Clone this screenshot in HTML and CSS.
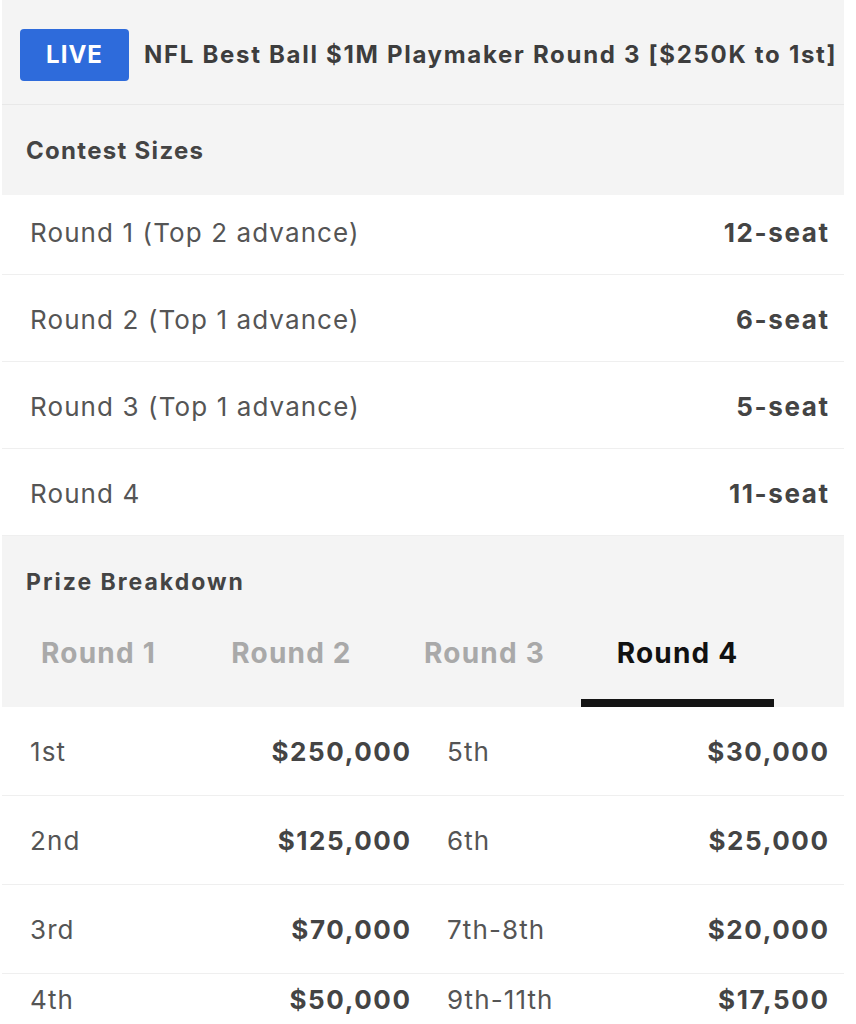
FILE: index.html
```html
<!DOCTYPE html>
<html lang="en">
<head>
<meta charset="utf-8">
<title>Contest Details</title>
<link rel="stylesheet" href="styles.css">
</head>
<body>
<main class="panel">
  <header class="header">
    <span class="badge">LIVE</span>
    <h1 class="title">NFL Best Ball $1M Playmaker Round 3 [$250K to 1st]</h1>
  </header>

  <h2 class="section-head">Contest Sizes</h2>
  <ul class="sizes">
    <li class="size-row size-row-first"><span class="label">Round 1 (Top 2 advance)</span><span class="value">12-seat</span></li>
    <li class="size-row"><span class="label">Round 2 (Top 1 advance)</span><span class="value">6-seat</span></li>
    <li class="size-row"><span class="label">Round 3 (Top 1 advance)</span><span class="value">5-seat</span></li>
    <li class="size-row"><span class="label">Round 4</span><span class="value">11-seat</span></li>
  </ul>

  <section class="prize">
    <h2 class="prize-title">Prize Breakdown</h2>
    <nav class="tabs">
      <span class="tab">Round 1</span>
      <span class="tab">Round 2</span>
      <span class="tab">Round 3</span>
      <span class="tab tab-active">Round 4</span>
    </nav>
  </section>

  <div class="payouts">
    <div class="pay-row">
      <div class="pay-cell"><span class="label">1st</span><span class="amount">$250,000</span></div>
      <div class="pay-cell"><span class="label">5th</span><span class="amount">$30,000</span></div>
    </div>
    <div class="pay-row">
      <div class="pay-cell"><span class="label">2nd</span><span class="amount">$125,000</span></div>
      <div class="pay-cell"><span class="label">6th</span><span class="amount">$25,000</span></div>
    </div>
    <div class="pay-row">
      <div class="pay-cell"><span class="label">3rd</span><span class="amount">$70,000</span></div>
      <div class="pay-cell"><span class="label">7th-8th</span><span class="amount">$20,000</span></div>
    </div>
    <div class="pay-row pay-row-last">
      <div class="pay-cell"><span class="label">4th</span><span class="amount">$50,000</span></div>
      <div class="pay-cell"><span class="label">9th-11th</span><span class="amount">$17,500</span></div>
    </div>
  </div>
</main>
</body>
</html>
```

FILE: styles.css
```css
* { box-sizing: border-box; }

html, body {
  margin: 0;
  padding: 0;
  background: #ffffff;
  height: 1024px;
  overflow: hidden;
}

body {
  font-family: Inter, "Liberation Sans", Arial, sans-serif;
  color: #4a4a4a;
}

.panel {
  width: 842px;
  margin-left: 2px;
}

.header {
  display: flex;
  align-items: center;
  gap: 15px;
  height: 105px;
  padding: 5px 0 0 18px;
  background: #f4f4f4;
  border-bottom: 1px solid #e8e8e8;
  overflow: hidden;
  white-space: nowrap;
}

.badge {
  flex: none;
  display: flex;
  align-items: center;
  justify-content: center;
  width: 109px;
  height: 52px;
  border-radius: 4px;
  background: #2e6bdb;
  color: #ffffff;
  font-weight: 700;
  font-size: 24px;
  letter-spacing: 1px;
}

.title {
  margin: 0;
  font-size: 24px;
  font-weight: 700;
  letter-spacing: 1.7px;
  color: #3d3d3d;
}

.section-head {
  margin: 0;
  display: flex;
  align-items: center;
  height: 90px;
  padding-left: 24px;
  background: #f4f4f4;
  font-size: 24px;
  font-weight: 700;
  letter-spacing: 1.3px;
  color: #444444;
}

.sizes {
  list-style: none;
  margin: 0;
  padding: 0;
}

.size-row {
  display: flex;
  align-items: center;
  justify-content: space-between;
  height: 87px;
  padding: 3px 16px 0 28px;
  border-bottom: 1px solid #efefef;
}

.size-row-first {
  height: 80px;
  padding-top: 0;
  padding-bottom: 5px;
}

.label {
  font-size: 26px;
  letter-spacing: 1.1px;
  color: #555555;
}

.value,
.amount {
  margin-right: -1.6px;
  font-size: 26px;
  font-weight: 700;
  letter-spacing: 1.6px;
  color: #444444;
}

.prize {
  background: #f4f4f4;
  padding-top: 1px;
}

.prize-title {
  margin: 0;
  padding: 31px 0 0 24px;
  line-height: 28px;
  font-size: 23px;
  font-weight: 700;
  letter-spacing: 2px;
  color: #444444;
}

.tabs {
  display: grid;
  grid-template-columns: repeat(4, 193px);
}

.tab {
  display: flex;
  align-items: center;
  justify-content: center;
  height: 111px;
  padding-top: 2px;
  font-size: 28px;
  font-weight: 700;
  letter-spacing: 1.2px;
  color: #a9a9a9;
}

.tab-active {
  color: #111111;
  box-shadow: inset 0 -8px 0 #141414;
}

.pay-row {
  display: grid;
  grid-template-columns: 380px 381px;
  column-gap: 37px;
  align-items: center;
  height: 89px;
  padding: 0 16px 0 28px;
  border-bottom: 1px solid #efefef;
}

.pay-row-last {
  height: 51px;
  border-bottom: none;
}

.pay-cell {
  display: flex;
  justify-content: space-between;
  align-items: center;
}
```
